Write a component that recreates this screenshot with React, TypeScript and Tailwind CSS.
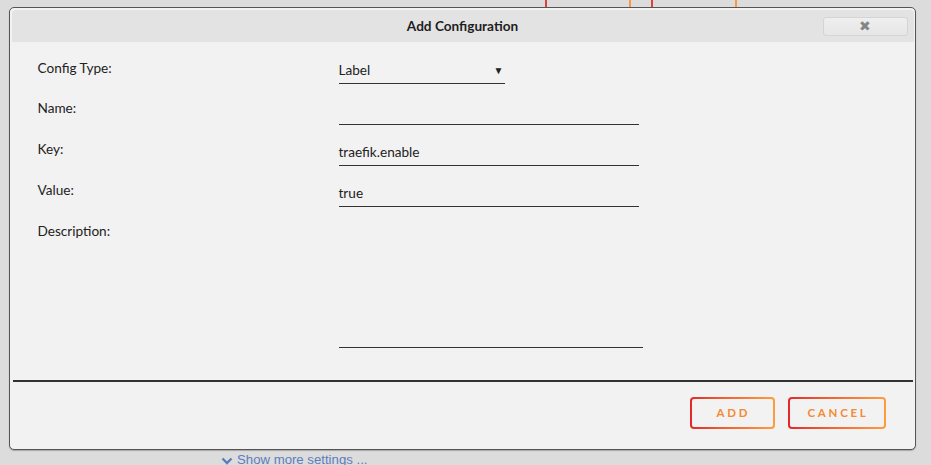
import React from "react";

function Field({ label, value, width, height, labelPad }: { label: string; value?: string; width: string; height: string; labelPad: string }) {
  return (
    <div className="flex items-start">
      <div className={`w-[301px] shrink-0 leading-[20px] ${labelPad}`}>{label}</div>
      <div className={`${width} ${height} flex items-start border-b-[1.5px] border-[#333] pt-[4px] leading-[20px]`}>{value}</div>
    </div>
  );
}

export default function App() {
  return (
    <div className="relative h-[465px] w-[931px] overflow-hidden bg-[#dcdcdc] pt-[7px] pl-[9px] text-[#222]" style={{ fontFamily: "Lato, 'Open Sans', sans-serif" }}>
      <div className="absolute left-[545px] top-0 h-[8px] w-[2px] bg-[#e0403a]" />
      <div className="absolute left-[629px] top-0 h-[8px] w-[2px] bg-[#f59a45]" />
      <div className="absolute left-[651px] top-0 h-[8px] w-[2px] bg-[#e0403a]" />
      <div className="absolute left-[735px] top-0 h-[8px] w-[2px] bg-[#f59a45]" />

      <div className="relative flex h-[443px] w-[907px] flex-col rounded-[5px] border border-[#555] bg-[#f2f2f2] p-[1.5px] shadow-[0_1px_1px_rgba(0,0,0,0.25)]">
        <div className="relative flex h-[32px] shrink-0 items-center justify-center rounded-t-[4px] bg-[#e3e3e3]">
          <span className="pt-[2px] text-[13.6px] font-bold text-[#1e1e1e]">Add Configuration</span>
          <button className="absolute right-[6px] top-[7px] flex h-[19px] w-[85px] items-center justify-center rounded-[3px] border border-[#d4d4d4] bg-gradient-to-b from-[#efefef] to-[#e6e6e6] text-[14px] leading-none text-[#858585]">
            ✖
          </button>
        </div>

        <div className="flex flex-1 flex-col gap-[13px] pl-[26px] pt-[14px] text-[13.6px]">
          <div className="flex items-start">
            <div className="w-[301px] shrink-0 pt-[2px] leading-[20px]">Config Type:</div>
            <div className="flex h-[28px] w-[166px] items-start justify-between border-b-[1.5px] border-[#333] pt-[4px] leading-[20px]">
              <span>Label</span>
              <span className="pr-[1px] text-[10px] leading-[20px]">▼</span>
            </div>
          </div>
          <Field label="Name:" width="w-[300px]" height="h-[28px]" labelPad="pt-[1px]" />
          <Field label="Key:" value="traefik.enable" width="w-[300px]" height="h-[28px]" labelPad="pt-[1px]" />
          <Field label="Value:" value="true" width="w-[300px]" height="h-[28px]" labelPad="pt-[1px]" />
          <Field label="Description:" width="w-[304px]" height="h-[128px]" labelPad="pt-[1px]" />
        </div>

        <div className="mx-[1px] h-[1.5px] shrink-0 bg-[#333]" />

        <div className="flex h-[66px] shrink-0 items-start justify-end gap-[13px] pr-[28px] pt-[15px]">
          <div className="rounded-[4px] bg-gradient-to-r from-[#e2262c] to-[#ff9c3d] p-[2px]">
            <div className="flex h-[28px] w-[81px] items-center justify-center rounded-[2px] bg-[#f2f2f2] pl-[3px] text-[11.5px] font-bold tracking-[0.24em] text-[#f48a33]">
              ADD
            </div>
          </div>
          <div className="rounded-[4px] bg-gradient-to-r from-[#e2262c] to-[#ff9c3d] p-[2px]">
            <div className="flex h-[28px] w-[94px] items-center justify-center rounded-[2px] bg-[#f2f2f2] pl-[3px] text-[11.5px] font-bold tracking-[0.24em] text-[#f48a33]">
              CANCEL
            </div>
          </div>
        </div>
      </div>

      <div className="ml-[212px] flex items-center gap-[4px] pt-[1px] text-[13.2px] leading-[18px] text-[#5b7cbf]" style={{ fontFamily: "'Liberation Sans', Arial, sans-serif" }}>
        <svg width="12" height="12" viewBox="0 0 12 12" className="mt-[1px]">
          <path d="M1.5 3.5 L6 8 L10.5 3.5" fill="none" stroke="#5b7cbf" strokeWidth="2.4" />
        </svg>
        <span>Show more settings ...</span>
      </div>
    </div>
  );
}
